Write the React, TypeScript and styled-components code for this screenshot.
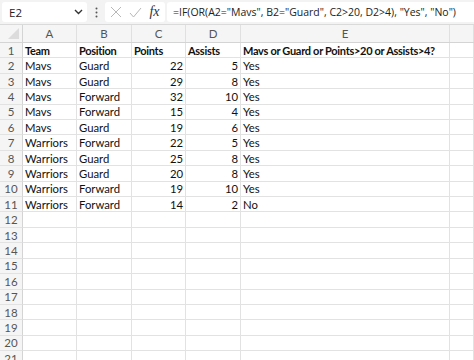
import React from "react";
import styled, { createGlobalStyle } from "styled-components";

const Global = createGlobalStyle`
  html, body { margin: 0; padding: 0; background: #ffffff; }
  body { width: 474px; height: 360px; overflow: hidden; font-family: Lato, "Open Sans", sans-serif; }
`;

const COLS = "23px 54px 55px 54px 55px 209px 24px";
const ROW_H = 15.42;

const Page = styled.div`
  width: 474px;
  height: 360px;
  display: flex;
  flex-direction: column;
  overflow: hidden;
  background: #fff;
`;

const FormulaBar = styled.div`
  height: 25px;
  flex: none;
  display: flex;
  align-items: center;
  gap: 2px;
  padding: 0 0 0 2px;
  background: #f3f3f3;
  border-bottom: 1px solid #dadada;
  box-sizing: border-box;
`;

const NameBox = styled.div`
  width: 85px;
  height: 20px;
  box-sizing: border-box;
  background: #fff;
  border-radius: 3px;
  display: flex;
  align-items: center;
  justify-content: space-between;
  padding: 0 4px 0 7px;
  font-family: "Open Sans", sans-serif;
  font-size: 11.5px;
  color: #222;
`;

const Dots = styled.div`
  width: 14px;
  display: flex;
  justify-content: center;
`;

const IconBox = styled.div`
  width: 60px;
  height: 20px;
  background: #fff;
  border-radius: 3px;
  display: flex;
  align-items: center;
  justify-content: space-around;
  padding: 0 2px;
  box-sizing: border-box;
`;

const Fx = styled.span`
  font-family: "Liberation Serif", serif;
  font-style: italic;
  font-size: 14px;
  color: #333;
`;

const FormulaInput = styled.div`
  flex: 1;
  height: 20px;
  background: #fff;
  border-radius: 3px 0 0 3px;
  display: flex;
  align-items: center;
  padding-left: 6px;
  font-family: "Open Sans", sans-serif;
  font-size: 10.5px;
  color: #222;
  white-space: nowrap;
  overflow: hidden;
`;

const Grid = styled.div`
  display: grid;
  grid-template-columns: ${COLS};
  grid-auto-rows: ${ROW_H}px;
`;

const HeaderGrid = styled.div`
  display: grid;
  grid-template-columns: ${COLS};
  height: 18px;
  flex: none;
  background: #f5f5f5;
  border-bottom: 1px solid #d4d4d4;
  box-sizing: border-box;
`;

const ColHead = styled.div`
  border-right: 1px solid #e0e0e0;
  display: flex;
  align-items: center;
  justify-content: center;
  font-size: 11.5px;
  color: #555;
`;

const Corner = styled.div`
  border-right: 1px solid #d4d4d4;
  position: relative;
`;

const Triangle = styled.div`
  position: absolute;
  right: 3px;
  bottom: 3px;
  width: 0;
  height: 0;
  border-left: 11px solid transparent;
  border-bottom: 11px solid #dcdcdc;
`;

const RowHead = styled.div`
  background: #f5f5f5;
  border-right: 1px solid #d4d4d4;
  border-bottom: 1px solid #e2e2e2;
  font-size: 11.5px;
  color: #555;
  display: flex;
  align-items: center;
  justify-content: center;
  box-sizing: border-box;
`;

const Cell = styled.div<{ $right?: boolean; $bold?: boolean }>`
  border-right: 1px solid #e2e2e2;
  border-bottom: 1px solid #e2e2e2;
  box-sizing: border-box;
  font-size: ${(p) => (p.$bold ? "11px" : "11.3px")};
  letter-spacing: ${(p) => (p.$bold ? "-0.3px" : "0")};
  font-weight: ${(p) => (p.$bold ? 700 : 400)};
  color: #111;
  display: flex;
  align-items: center;
  justify-content: ${(p) => (p.$right ? "flex-end" : "flex-start")};
  padding: 0 2px;
  white-space: nowrap;
`;

const data: [string, string, string, string, string][] = [
  ["Mavs", "Guard", "22", "5", "Yes"],
  ["Mavs", "Guard", "29", "8", "Yes"],
  ["Mavs", "Forward", "32", "10", "Yes"],
  ["Mavs", "Forward", "15", "4", "Yes"],
  ["Mavs", "Guard", "19", "6", "Yes"],
  ["Warriors", "Forward", "22", "5", "Yes"],
  ["Warriors", "Guard", "25", "8", "Yes"],
  ["Warriors", "Guard", "20", "8", "Yes"],
  ["Warriors", "Forward", "19", "10", "Yes"],
  ["Warriors", "Forward", "14", "2", "No"],
];

const letters = ["A", "B", "C", "D", "E", ""];

export default function App() {
  const rows: React.ReactNode[] = [];
  rows.push(
    <React.Fragment key="r1">
      <RowHead>1</RowHead>
      <Cell $bold>Team</Cell>
      <Cell $bold>Position</Cell>
      <Cell $bold>Points</Cell>
      <Cell $bold>Assists</Cell>
      <Cell $bold>Mavs or Guard or Points&gt;20 or Assists&gt;4?</Cell>
      <Cell />
    </React.Fragment>
  );
  data.forEach((d, i) => {
    rows.push(
      <React.Fragment key={"r" + (i + 2)}>
        <RowHead>{i + 2}</RowHead>
        <Cell>{d[0]}</Cell>
        <Cell>{d[1]}</Cell>
        <Cell $right>{d[2]}</Cell>
        <Cell $right>{d[3]}</Cell>
        <Cell>{d[4]}</Cell>
        <Cell />
      </React.Fragment>
    );
  });
  for (let r = 12; r <= 21; r++) {
    rows.push(
      <React.Fragment key={"r" + r}>
        <RowHead>{r}</RowHead>
        <Cell />
        <Cell />
        <Cell />
        <Cell />
        <Cell />
        <Cell />
      </React.Fragment>
    );
  }
  return (
    <Page>
      <Global />
      <FormulaBar>
        <NameBox>
          <span>E2</span>
          <svg width="9" height="6" viewBox="0 0 9 6">
            <path d="M1 1 L4.5 4.5 L8 1" fill="none" stroke="#333" strokeWidth="1.4" />
          </svg>
        </NameBox>
        <Dots>
          <svg width="3" height="11" viewBox="0 0 3 11">
            <circle cx="1.5" cy="1.5" r="1" fill="#555" />
            <circle cx="1.5" cy="5.5" r="1" fill="#555" />
            <circle cx="1.5" cy="9.5" r="1" fill="#555" />
          </svg>
        </Dots>
        <IconBox>
          <svg width="12" height="12" viewBox="0 0 12 12">
            <path d="M1 1 L11 11 M11 1 L1 11" stroke="#b8b8b8" strokeWidth="1" />
          </svg>
          <svg width="13" height="11" viewBox="0 0 13 11">
            <path d="M1 6 L4.5 10 L12 1" fill="none" stroke="#b8b8b8" strokeWidth="1" />
          </svg>
          <Fx>fx</Fx>
        </IconBox>
        <FormulaInput>=IF(OR(A2="Mavs", B2="Guard", C2&gt;20, D2&gt;4), "Yes", "No")</FormulaInput>
      </FormulaBar>
      <HeaderGrid>
        <Corner>
          <Triangle />
        </Corner>
        {letters.map((l, i) => (
          <ColHead key={i}>{l}</ColHead>
        ))}
      </HeaderGrid>
      <Grid>{rows}</Grid>
    </Page>
  );
}
